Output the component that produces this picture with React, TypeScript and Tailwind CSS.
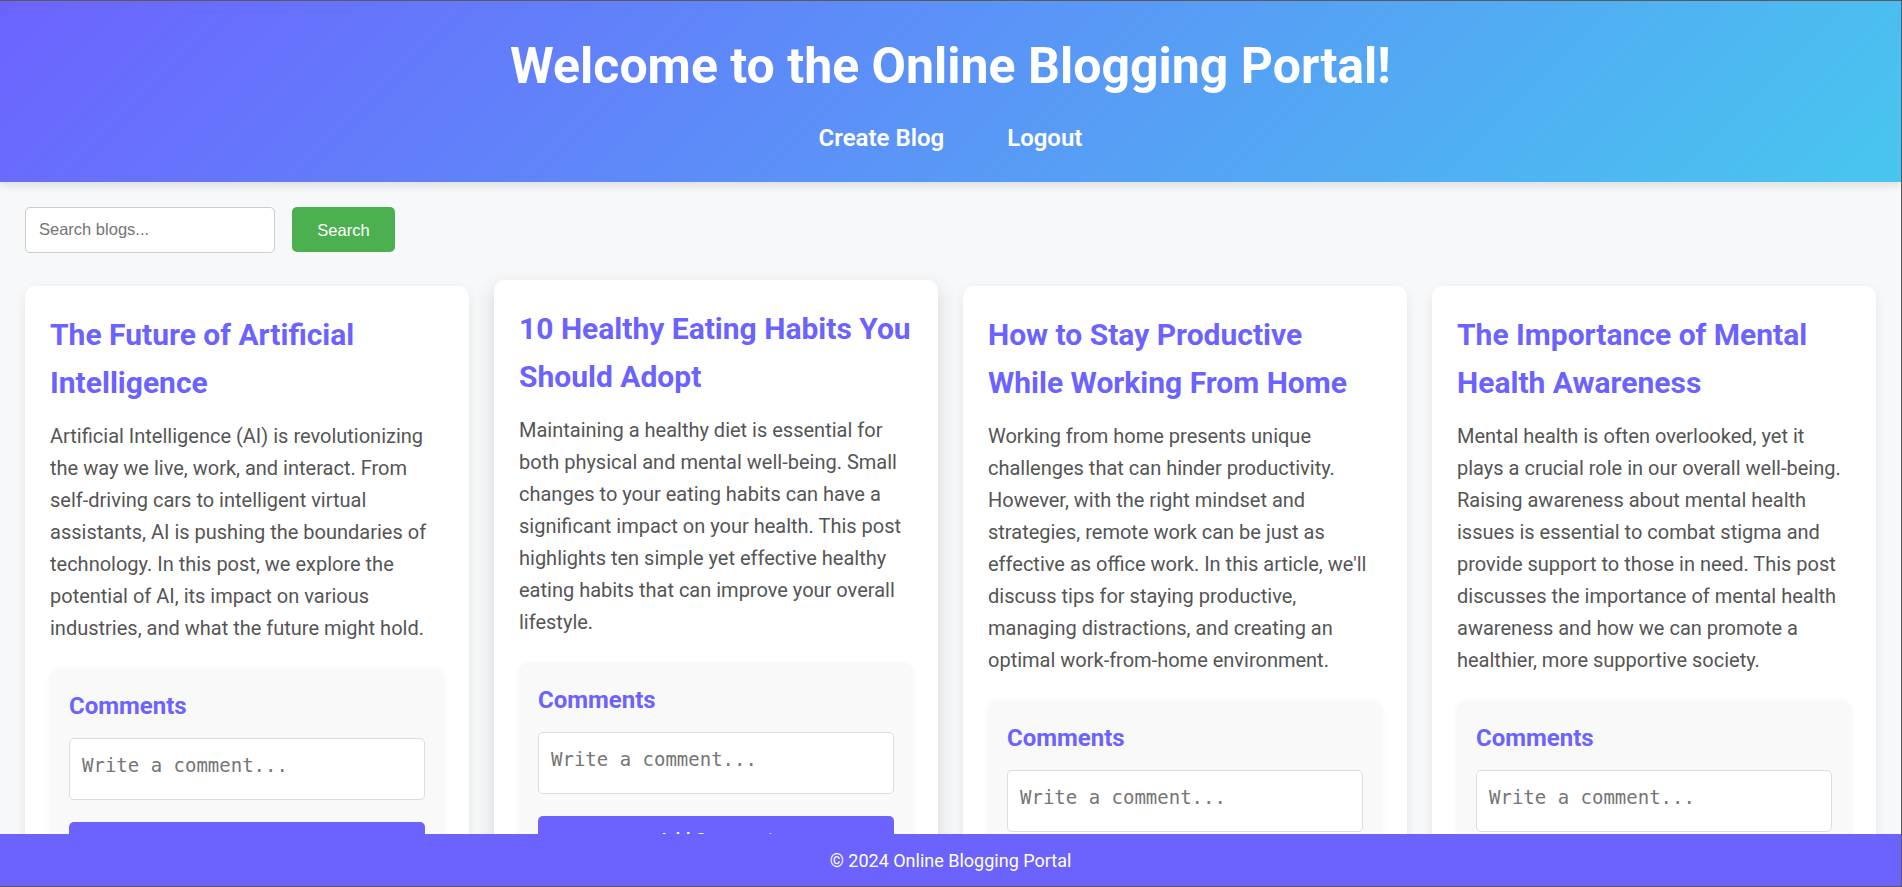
import React from "react";

const posts = [
  {
    title: "The Future of Artificial Intelligence",
    body: "Artificial Intelligence (AI) is revolutionizing the way we live, work, and interact. From self-driving cars to intelligent virtual assistants, AI is pushing the boundaries of technology. In this post, we explore the potential of AI, its impact on various industries, and what the future might hold.",
  },
  {
    title: "10 Healthy Eating Habits You Should Adopt",
    body: "Maintaining a healthy diet is essential for both physical and mental well-being. Small changes to your eating habits can have a significant impact on your health. This post highlights ten simple yet effective healthy eating habits that can improve your overall lifestyle.",
    hovered: true,
  },
  {
    title: "How to Stay Productive While Working From Home",
    body: "Working from home presents unique challenges that can hinder productivity. However, with the right mindset and strategies, remote work can be just as effective as office work. In this article, we'll discuss tips for staying productive, managing distractions, and creating an optimal work-from-home environment.",
  },
  {
    title: "The Importance of Mental Health Awareness",
    body: "Mental health is often overlooked, yet it plays a crucial role in our overall well-being. Raising awareness about mental health issues is essential to combat stigma and provide support to those in need. This post discusses the importance of mental health awareness and how we can promote a healthier, more supportive society.",
  },
];

function Card({ title, body, hovered }: { title: string; body: string; hovered?: boolean }) {
  return (
    <div
      className={
        hovered
          ? "bg-white rounded-[10px] p-[25px] -translate-y-[6px] shadow-[0_8px_20px_rgba(0,0,0,0.15)]"
          : "bg-white rounded-[10px] p-[25px] shadow-[0_4px_12px_rgba(0,0,0,0.08)]"
      }
    >
      <h2 className="text-[30px] font-bold leading-[1.6] text-[#6c63ff] mb-[12.8px]">{title}</h2>
      <p className="text-[20px] leading-[1.6] text-[#555] min-h-[224px]">{body}</p>
      <div className="mt-[24px] bg-[#f9f9f9] rounded-[10px] p-[19px] shadow-[0_2px_6px_rgba(0,0,0,0.05)]">
        <h3 className="text-[24px] font-bold leading-[1.6] text-[#6c63ff] mb-[12.6px]">Comments</h3>
        <textarea
          placeholder="Write a comment..."
          className="block w-full h-[62px] resize-none border border-[#ddd] rounded-[5px] bg-white px-[12px] pt-[11px] text-[19px] leading-[1.6] font-['DejaVu_Sans_Mono',monospace] placeholder:text-[#757575] outline-none"
        />
        <button className="block w-full mt-[22px] bg-[#6c63ff] text-white rounded-[5px] py-[10px] text-[18px] font-medium leading-[1.6]">
          Add Comment
        </button>
      </div>
    </div>
  );
}

export default function App() {
  return (
    <div className="relative h-[887px] overflow-hidden border-t border-r border-b border-[#5a5a5a] bg-[#f7f8fa] font-['Roboto',sans-serif]">
      <header className="bg-[linear-gradient(135deg,#6c63ff,#48c6ef)] text-white text-center pt-[34.6px] pb-[25px] shadow-[0_4px_8px_rgba(0,0,0,0.1)]">
        <h1 className="text-[50px] font-bold leading-[1.2] mb-[23px]">Welcome to the Online Blogging Portal!</h1>
        <nav className="flex justify-center gap-[63px] text-[24px] font-semibold leading-[1.6]">
          <a href="#">Create Blog</a>
          <a href="#">Logout</a>
        </nav>
      </header>
      <main className="px-[25px] pt-[25px]">
        <div className="flex items-center gap-[17px] mb-[33px] h-[46px]">
          <input
            placeholder="Search blogs..."
            className="w-[250px] h-[46px] border border-[#ccc] rounded-[5px] bg-white px-[13px] text-[16.5px] font-['Liberation_Sans',Arial,sans-serif] placeholder:text-[#757575] outline-none"
          />
          <button className="w-[103px] h-[45px] bg-[#4caf50] text-white rounded-[5px] text-[16.5px] font-['Liberation_Sans',Arial,sans-serif]">
            Search
          </button>
        </div>
        <div className="grid grid-cols-4 gap-[25px] items-start">
          {posts.map((p) => (
            <Card key={p.title} title={p.title} body={p.body} hovered={p.hovered} />
          ))}
        </div>
      </main>
      <footer className="absolute bottom-0 left-0 right-0 h-[52px] bg-[#6c63ff] text-white flex items-center justify-center text-[18px]">
        © 2024 Online Blogging Portal
      </footer>
    </div>
  );
}
